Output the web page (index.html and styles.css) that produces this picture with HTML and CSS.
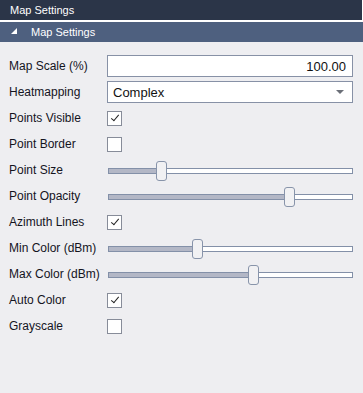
FILE: index.html
```html
<!DOCTYPE html>
<html lang="en">
<head>
  <meta charset="UTF-8">
  <meta name="viewport" content="width=device-width, initial-scale=1.0">
  <title>Map Settings</title>
  <link rel="stylesheet" href="styles.css">
</head>
<body>
  <!-- Window title -->
  <div class="title-bar">Map Settings</div>

  <!-- Section header -->
  <div class="section-header">
    <svg class="expander" width="6" height="6" viewBox="0 0 6 6"><polygon points="6,0 6,6 0,6" fill="#ffffff"/></svg>
    <span>Map Settings</span>
  </div>

  <!-- Settings -->
  <div class="settings">
    <label class="label">Map Scale (%)</label>
    <div class="field"><input class="text-input" type="text" value="100.00"></div>

    <label class="label">Heatmapping</label>
    <div class="field">
      <div class="select">
        <span>Complex</span>
        <svg width="8" height="5" viewBox="0 0 8 5"><polygon points="0,0 8,0 4,4" fill="#6b6f78"/></svg>
      </div>
    </div>

    <label class="label">Points Visible</label>
    <div class="field"><span class="check checked"></span></div>

    <label class="label">Point Border</label>
    <div class="field"><span class="check"></span></div>

    <label class="label">Point Size</label>
    <div class="field"><div class="slider"><div class="fill" style="width: 48px"></div><div class="thumb" style="left: 48px"></div></div></div>

    <label class="label">Point Opacity</label>
    <div class="field"><div class="slider"><div class="fill" style="width: 176px"></div><div class="thumb" style="left: 176px"></div></div></div>

    <label class="label">Azimuth Lines</label>
    <div class="field"><span class="check checked"></span></div>

    <label class="label">Min Color (dBm)</label>
    <div class="field"><div class="slider"><div class="fill" style="width: 84px"></div><div class="thumb" style="left: 84px"></div></div></div>

    <label class="label">Max Color (dBm)</label>
    <div class="field"><div class="slider"><div class="fill" style="width: 140px"></div><div class="thumb" style="left: 140px"></div></div></div>

    <label class="label">Auto Color</label>
    <div class="field"><span class="check checked"></span></div>

    <label class="label">Grayscale</label>
    <div class="field"><span class="check"></span></div>
  </div>
</body>
</html>
```

FILE: styles.css
```css
/* Global */
body {
  margin: 0;
  padding: 0;
  background-color: #ffffff;
  font-family: "Liberation Sans", Arial, sans-serif;
  height: 393px;
  display: flex;
  flex-direction: column;
  overflow: hidden;
}

/* Title bar */
.title-bar {
  background-color: #2b3548;
  color: #ffffff;
  font-size: 11px;
  height: 20px;
  line-height: 20px;
  padding-left: 10px;
  margin-right: 1px;
}

/* Section header */
.section-header {
  background-color: #4e607f;
  color: #ffffff;
  font-size: 11px;
  height: 20px;
  margin-top: 2px;
  display: flex;
  align-items: center;
}

.section-header .expander {
  margin-left: 11px;
  margin-right: 14px;
  margin-top: -2px;
}

/* Settings grid */
.settings {
  flex: 1;
  background-color: #eeeef1;
  padding: 13px 10px 0 9px;
  display: grid;
  grid-template-columns: 98px 1fr;
  grid-auto-rows: 22px;
  row-gap: 4px;
  align-content: start;
}

.label {
  font-size: 12px;
  color: #14141e;
  display: flex;
  align-items: center;
}

.field {
  display: flex;
  align-items: center;
}

.text-input {
  box-sizing: border-box;
  width: 100%;
  height: 22px;
  border: 1px solid #8791a6;
  background-color: #ffffff;
  font-family: "Liberation Sans", Arial, sans-serif;
  font-size: 13px;
  color: #111111;
  text-align: right;
  padding: 0 6px 0 4px;
  outline: none;
}

.select {
  box-sizing: border-box;
  width: 100%;
  height: 22px;
  border: 1px solid #8791a6;
  background-color: #ffffff;
  display: flex;
  align-items: center;
  justify-content: space-between;
  padding: 0 8px 0 5px;
  font-size: 13px;
  color: #111111;
}

/* Checkbox */
.check {
  box-sizing: border-box;
  width: 15px;
  height: 15px;
  border: 1px solid #878c99;
  background-color: #ffffff;
  position: relative;
}

.check.checked::after {
  content: "";
  position: absolute;
  left: 5px;
  top: 1px;
  width: 3px;
  height: 7px;
  border-right: 1px solid #222222;
  border-bottom: 1px solid #222222;
  transform: rotate(40deg);
}

/* Slider */
.slider {
  position: relative;
  box-sizing: border-box;
  width: calc(100% - 1px);
  height: 6px;
  margin-left: 1px;
  margin-top: 1px;
  border: 1px solid #8390a8;
  background-color: #ffffff;
}

.slider .fill {
  height: 100%;
  background-color: #b3b7c6;
}

.slider .thumb {
  position: absolute;
  top: -8px;
  box-sizing: border-box;
  width: 11px;
  height: 20px;
  margin-left: -1px;
  border: 1px solid #8894aa;
  border-radius: 3px;
  background-color: #f1f1f3;
}
```
